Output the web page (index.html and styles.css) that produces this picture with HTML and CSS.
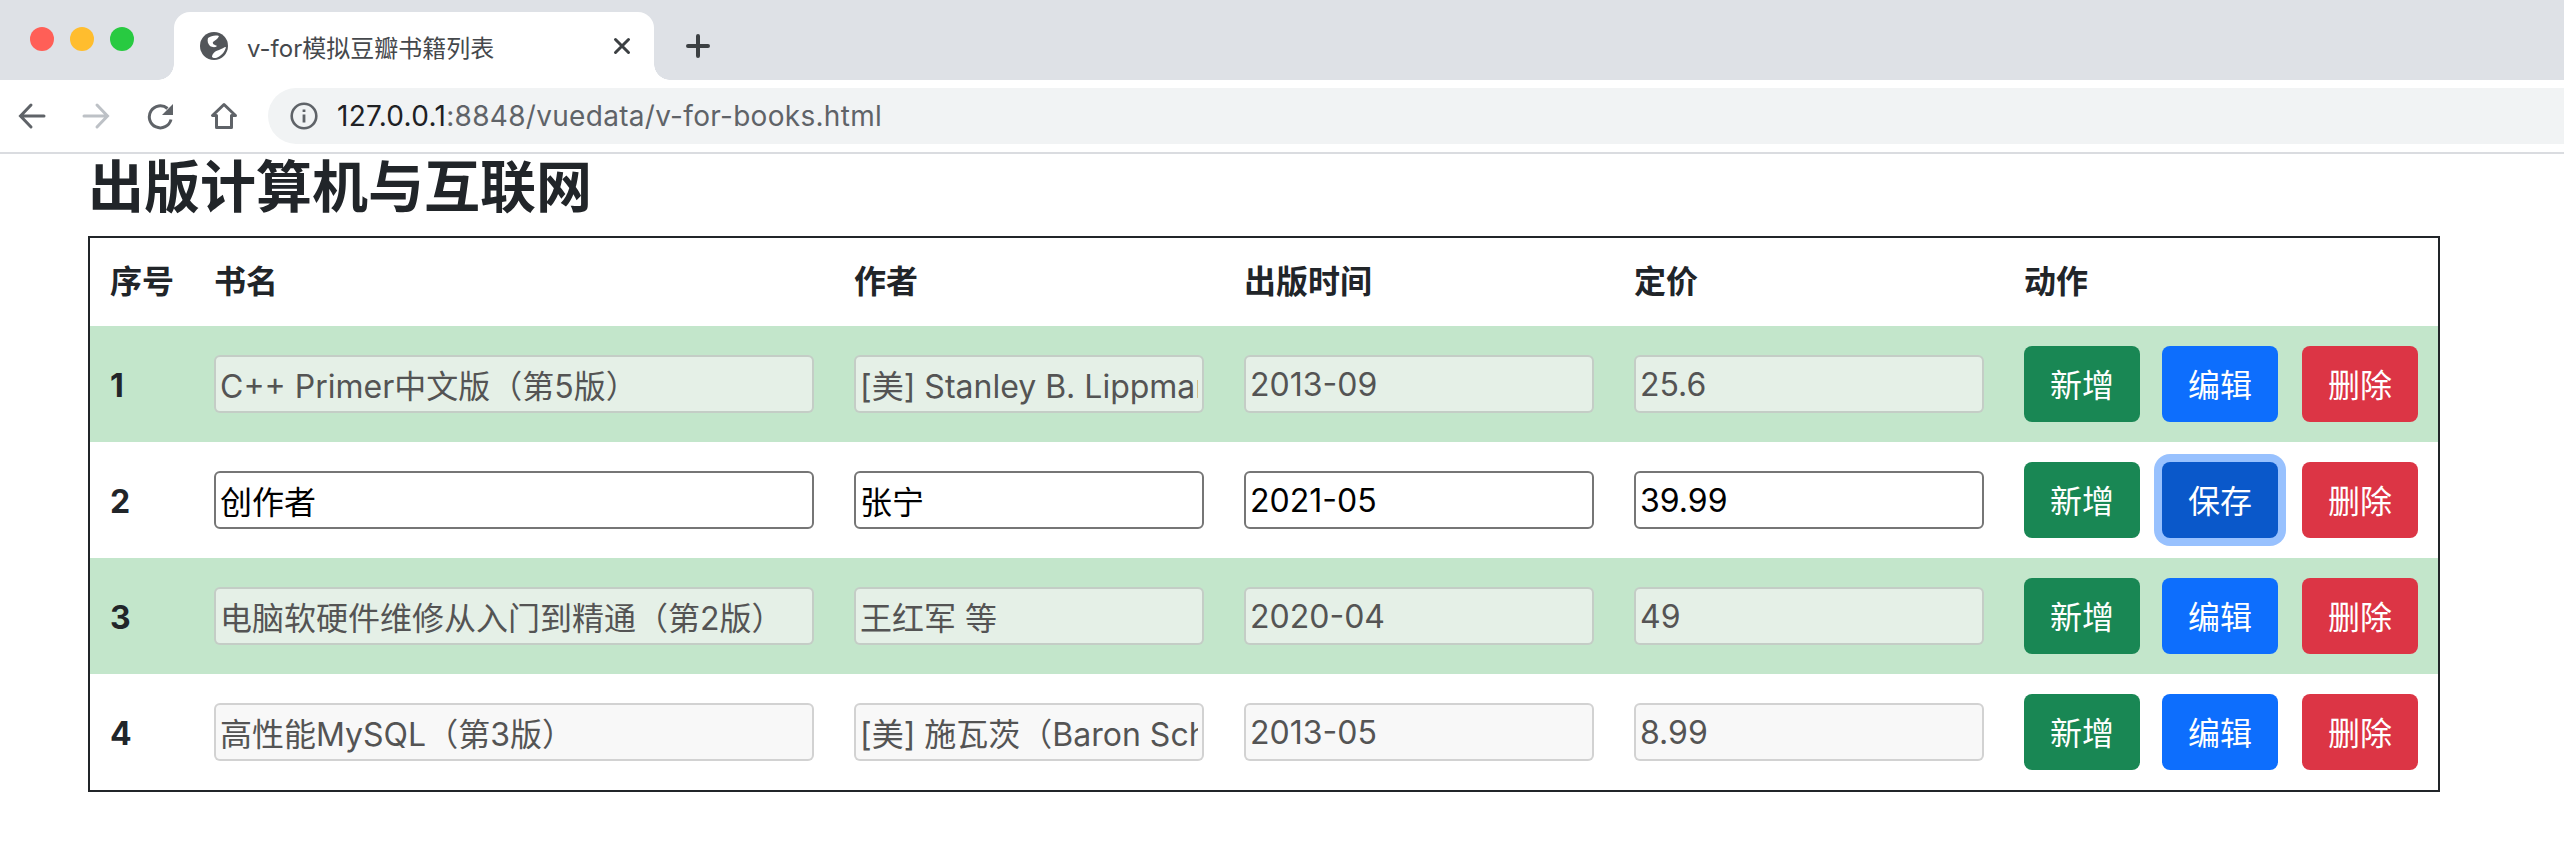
FILE: index.html
```html
<!DOCTYPE html>
<html lang="zh">
<head>
  <meta charset="UTF-8">
  <title>v-for模拟豆瓣书籍列表</title>
  <link rel="stylesheet" href="styles.css">
</head>
<body>

  <div class="tabstrip">
    <div class="luces">
      <span class="luz roja"></span>
      <span class="luz amarilla"></span>
      <span class="luz verde"></span>
    </div>
    <div class="tab">
      <svg class="globo" viewBox="0 0 28 28">
        <circle cx="14" cy="14" r="14" fill="#53565a"/>
        <path d="M8 6C11 4 15 3 19 4C18 7 15 8 13 10C12 12 15 13 17 14C15 16 12 15 10 14C8 12 7 9 8 6Z" fill="#fff"/>
        <path d="M12 25C12 22 15 19 19 18C22 17 24 15 26 15C25 20 21 24 16 26C14 26 13 26 12 25Z" fill="#fff"/>
      </svg>
      <span class="tab-titulo">v-for模拟豆瓣书籍列表</span>
      <svg class="tab-cerrar" viewBox="0 0 18 18">
        <path d="M2.5 2.5l13 13M15.5 2.5l-13 13" stroke="#3c4043" stroke-width="3" fill="none" stroke-linecap="round"/>
      </svg>
    </div>
    <svg class="tab-nuevo" viewBox="0 0 24 24">
      <path d="M12 2v20M2 12h20" stroke="#3c4043" stroke-width="4" fill="none" stroke-linecap="round"/>
    </svg>
  </div>

  <div class="toolbar">
    <svg class="nav-icono" viewBox="0 0 28 28">
      <path d="M26 14H3M13 3L2.5 14 13 25" stroke="#5f6368" stroke-width="3" fill="none" stroke-linecap="round"/>
    </svg>
    <svg class="nav-icono" viewBox="0 0 28 28">
      <path d="M2 14h23M15 3l10.5 11L15 25" stroke="#bdc1c6" stroke-width="3" fill="none" stroke-linecap="round"/>
    </svg>
    <svg class="nav-icono" viewBox="0 0 28 28">
      <path d="M25 17.5A11 11 0 1 1 21.5 6.5" stroke="#5f6368" stroke-width="3" fill="none"/>
      <path d="M27 2v11H16z" fill="#5f6368"/>
    </svg>
    <svg class="nav-icono" viewBox="0 0 28 28">
      <path d="M14 2.5L2.5 13.5H6.5V25.5H21.5V13.5H25.5Z" stroke="#5f6368" stroke-width="3" fill="none" stroke-linejoin="round"/>
    </svg>
    <div class="direccion">
      <svg class="info" viewBox="0 0 28 28">
        <circle cx="14" cy="14" r="12.3" stroke="#5f6368" stroke-width="2.6" fill="none"/>
        <path d="M14 12.5v8M14 7.5v2.6" stroke="#5f6368" stroke-width="2.8" fill="none"/>
      </svg>
      <span class="url"><span class="host">127.0.0.1</span>:8848/vuedata/v-for-books.html</span>
    </div>
  </div>

  <div class="pagina">
    <h2>出版计算机与互联网</h2>
    <table class="libros">
      <thead>
        <tr>
          <th>序号</th>
          <th>书名</th>
          <th>作者</th>
          <th>出版时间</th>
          <th>定价</th>
          <th>动作</th>
        </tr>
      </thead>
      <tbody>
        <tr class="verde-fila">
          <th>1</th>
          <td><input class="campo-libro" type="text" value="C++ Primer中文版（第5版）" disabled></td>
          <td><input class="campo" type="text" value="[美] Stanley B. Lippman 等" disabled></td>
          <td><input class="campo" type="text" value="2013-09" disabled></td>
          <td><input class="campo" type="text" value="25.6" disabled></td>
          <td>
            <div class="acciones">
              <button class="btn nuevo">新增</button>
              <button class="btn editar">编辑</button>
              <button class="btn borrar">删除</button>
            </div>
          </td>
        </tr>
        <tr>
          <th>2</th>
          <td><input class="campo-libro" type="text" value="创作者"></td>
          <td><input class="campo" type="text" value="张宁"></td>
          <td><input class="campo" type="text" value="2021-05"></td>
          <td><input class="campo" type="text" value="39.99"></td>
          <td>
            <div class="acciones">
              <button class="btn nuevo">新增</button>
              <button class="btn editar guardando">保存</button>
              <button class="btn borrar">删除</button>
            </div>
          </td>
        </tr>
        <tr class="verde-fila">
          <th>3</th>
          <td><input class="campo-libro" type="text" value="电脑软硬件维修从入门到精通（第2版）" disabled></td>
          <td><input class="campo" type="text" value="王红军 等" disabled></td>
          <td><input class="campo" type="text" value="2020-04" disabled></td>
          <td><input class="campo" type="text" value="49" disabled></td>
          <td>
            <div class="acciones">
              <button class="btn nuevo">新增</button>
              <button class="btn editar">编辑</button>
              <button class="btn borrar">删除</button>
            </div>
          </td>
        </tr>
        <tr>
          <th>4</th>
          <td><input class="campo-libro" type="text" value="高性能MySQL（第3版）" disabled></td>
          <td><input class="campo" type="text" value="[美] 施瓦茨（Baron Schwartz）等" disabled></td>
          <td><input class="campo" type="text" value="2013-05" disabled></td>
          <td><input class="campo" type="text" value="8.99" disabled></td>
          <td>
            <div class="acciones">
              <button class="btn nuevo">新增</button>
              <button class="btn editar">编辑</button>
              <button class="btn borrar">删除</button>
            </div>
          </td>
        </tr>
      </tbody>
    </table>
  </div>

</body>
</html>
```

FILE: styles.css
```css
body {
  margin: 0;
  padding: 0;
  background-color: #fff;
  color: #212529;
  font-family: Inter, "Noto Sans CJK SC", sans-serif;
  overflow: hidden;
}

/* barra de pestañas */
.tabstrip {
  display: flex;
  align-items: flex-end;
  height: 80px;
  background-color: #dee1e6;
}
.luces {
  display: flex;
  gap: 16px;
  align-self: flex-start;
  margin: 27px 0 0 30px;
  width: 144px;
}
.luz {
  width: 24px;
  height: 24px;
  border-radius: 50%;
}
.roja { background-color: #ff5f57; }
.amarilla { background-color: #ffbd2e; }
.verde { background-color: #28ca41; }
.tab {
  position: relative;
  display: flex;
  align-items: center;
  box-sizing: border-box;
  width: 480px;
  height: 68px;
  padding: 0 23px 0 26px;
  background-color: #fff;
  border-radius: 16px 16px 0 0;
}
.tab::before,
.tab::after {
  content: "";
  position: absolute;
  bottom: 0;
  width: 16px;
  height: 16px;
}
.tab::before {
  right: 100%;
  background: radial-gradient(circle at 0 0, transparent 15.5px, #fff 16px);
}
.tab::after {
  left: 100%;
  background: radial-gradient(circle at 100% 0, transparent 15.5px, #fff 16px);
}
.globo {
  width: 28px;
  height: 28px;
  margin-right: 19px;
}
.tab-titulo {
  flex: 1;
  font-size: 24px;
  color: #45484c;
}
.tab-cerrar {
  width: 18px;
  height: 18px;
}
.tab-nuevo {
  align-self: flex-start;
  width: 24px;
  height: 24px;
  margin: 34px 0 0 32px;
}

/* barra de direcciones */
.toolbar {
  display: flex;
  align-items: center;
  height: 72px;
  padding-left: 18px;
  background-color: #fff;
  border-bottom: 2px solid #dadce0;
}
.nav-icono {
  width: 28px;
  height: 28px;
  margin-right: 36px;
}
.nav-icono:nth-child(4) {
  margin-right: 30px;
}
.direccion {
  display: flex;
  align-items: center;
  flex: 1;
  height: 56px;
  padding-left: 22px;
  background-color: #f1f3f4;
  border-radius: 28px 0 0 28px;
}
.info {
  width: 28px;
  height: 28px;
  margin-right: 19px;
}
.url {
  font-size: 28px;
  letter-spacing: 0.3px;
  color: #5f6368;
}
.host {
  color: #202124;
}

/* contenido */
.pagina {
  padding: 0 124px 0 88px;
}
h2 {
  margin: 0 0 15px 0;
  font-size: 56px;
  font-weight: 700;
  line-height: 67px;
  color: #212529;
}
.libros {
  width: 100%;
  table-layout: fixed;
  border-collapse: separate;
  border-spacing: 0;
  border: 2px solid #212529;
  font-size: 32px;
  line-height: 48px;
}
.libros th,
.libros td {
  padding: 20px;
  text-align: left;
  vertical-align: middle;
  white-space: nowrap;
}
.libros thead th {
  box-sizing: border-box;
  width: 390px;
}
.libros thead th:nth-child(1) { width: 104px; }
.libros thead th:nth-child(2) { width: 640px; }
.libros thead th:nth-child(6) { width: 434px; }
.libros tbody th {
  padding: 22px 20px 18px;
}
.verde-fila {
  background-color: #c3e6cb;
}
.campo,
.campo-libro {
  display: block;
  box-sizing: border-box;
  height: 58px;
  padding: 2px 4px;
  border: 2px solid #767676;
  border-radius: 6px;
  background-color: #fff;
  color: #000;
  font-family: inherit;
  font-size: 32px;
}
.campo { width: 350px; }
.campo-libro { width: 600px; }
.campo:disabled,
.campo-libro:disabled {
  background-color: rgba(245, 245, 245, 0.68);
  border-color: rgba(118, 118, 118, 0.3);
  color: #545454;
}
.acciones {
  display: flex;
}
.btn {
  width: 116px;
  height: 76px;
  padding: 14px 0 10px;
  border: 2px solid transparent;
  border-radius: 8px;
  color: #fff;
  font-family: inherit;
  font-size: 32px;
  line-height: 48px;
}
.btn + .btn {
  margin-left: 22px;
}
.btn.borrar {
  margin-left: 24px;
}
.nuevo { background-color: #198754; }
.editar { background-color: #0d6efd; }
.borrar { background-color: #dc3545; }
.guardando {
  background-color: #0a58ca;
  box-shadow: 0 0 0 8px rgba(49, 132, 253, 0.5);
}
```
